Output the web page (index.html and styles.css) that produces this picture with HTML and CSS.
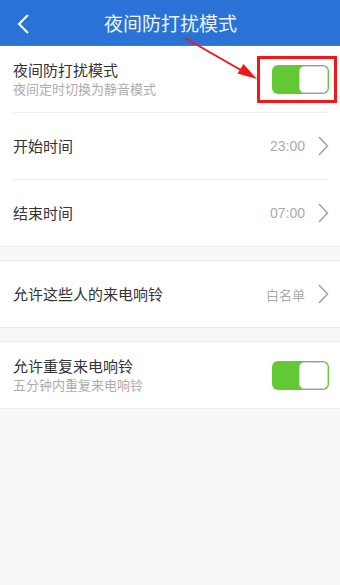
FILE: index.html
```html
<!DOCTYPE html>
<html lang="zh">
<head>
<meta charset="utf-8">
<link rel="stylesheet" href="styles.css">
</head>
<body>
<div class="page">
  <header class="bar">
    <svg class="back" width="20" height="24" viewBox="0 0 20 24"><polyline points="12,3 3,12 12,21" fill="none" stroke="#fff" stroke-width="2"/></svg>
    <div class="bar-title">夜间防打扰模式</div>
  </header>

  <section class="group first">
    <div class="row">
      <div class="texts">
        <div class="title">夜间防打扰模式</div>
        <div class="sub">夜间定时切换为静音模式</div>
      </div>
      <div class="toggle"><span class="knob"></span></div>
    </div>
    <div class="sep"></div>
    <div class="row">
      <div class="title">开始时间</div>
      <div class="right"><span class="value">23:00</span><svg class="chev" width="12" height="20" viewBox="0 0 12 20"><polyline points="2,1 10.5,10 2,19" fill="none" stroke="#a0a0a0" stroke-width="1.5"/></svg></div>
    </div>
    <div class="sep"></div>
    <div class="row">
      <div class="title">结束时间</div>
      <div class="right"><span class="value">07:00</span><svg class="chev" width="12" height="20" viewBox="0 0 12 20"><polyline points="2,1 10.5,10 2,19" fill="none" stroke="#a0a0a0" stroke-width="1.5"/></svg></div>
    </div>
  </section>

  <section class="group">
    <div class="row">
      <div class="title">允许这些人的来电响铃</div>
      <div class="right"><span class="value cjk">白名单</span><svg class="chev" width="12" height="20" viewBox="0 0 12 20"><polyline points="2,1 10.5,10 2,19" fill="none" stroke="#a0a0a0" stroke-width="1.5"/></svg></div>
    </div>
  </section>

  <section class="group">
    <div class="row">
      <div class="texts">
        <div class="title">允许重复来电响铃</div>
        <div class="sub">五分钟内重复来电响铃</div>
      </div>
      <div class="toggle"><span class="knob"></span></div>
    </div>
  </section>

  <div class="highlight"></div>
  <svg class="arrow" width="340" height="120" viewBox="0 0 340 120">
    <line x1="185" y1="38" x2="246" y2="73" stroke="#f01818" stroke-width="2"/>
    <polygon points="257,79 237.5,73.5 243.5,64" fill="#f01818"/>
  </svg>
</div>
</body>
</html>
```

FILE: styles.css
```css
* { box-sizing: border-box; }
html, body { margin: 0; padding: 0; }
body {
  background: #f8f8f8;
  font-family: "Liberation Sans", "Noto Sans CJK SC", sans-serif;
  width: 340px;
  height: 585px;
  overflow: hidden;
}
.page { position: relative; width: 340px; height: 585px; background: #f8f8f8; }
.bar {
  height: 46px;
  background: #2a72d5;
  display: flex;
  align-items: center;
  justify-content: center;
  position: relative;
  border-bottom: 1px solid #3b7fdb;
}
.back { position: absolute; left: 16px; top: 12px; }
.bar-title {
  color: #eef3fb;
  font-size: 19px;
  font-family: "Noto Sans CJK SC", sans-serif;
  line-height: 24px;
  margin-left: 1px;
}
.group {
  background: #fff;
  border-top: 1px solid #ececec;
  border-bottom: 1px solid #ececec;
  margin-top: 13px;
}
.group.first { margin-top: 0; border-top: none; }
.row {
  height: 66px;
  display: flex;
  align-items: center;
  justify-content: space-between;
  padding: 0 11px 0 13px;
}
.sep { height: 1px; background: #eeeeee; margin: 0 12px 0 13px; }
.texts { display: flex; flex-direction: column; }
.title {
  font-family: "Noto Sans CJK SC", sans-serif;
  font-size: 15px;
  line-height: 20px;
  color: #333;
}
.sub {
  font-family: "Noto Sans CJK SC", sans-serif;
  font-size: 13px;
  line-height: 18px;
  color: #acacac;
}
.right { display: flex; align-items: center; gap: 12px; }
.value { font-size: 14px; color: #ababab; }
.value.cjk { font-family: "Noto Sans CJK SC", sans-serif; font-size: 13px; }
.chev { display: block; }
.toggle {
  width: 57px;
  height: 29px;
  border-radius: 6px;
  background: #62c934;
  position: relative;
}
.knob {
  position: absolute;
  right: 1px;
  top: 1px;
  width: 29px;
  height: 27px;
  border-radius: 5px;
  background: #fff;
  border: 1px solid #d6d6d6;
}
.highlight {
  position: absolute;
  left: 257px;
  top: 56px;
  width: 80px;
  height: 47px;
  border: 3px solid #f01818;
}
.arrow { position: absolute; left: 0; top: 0; }
```
